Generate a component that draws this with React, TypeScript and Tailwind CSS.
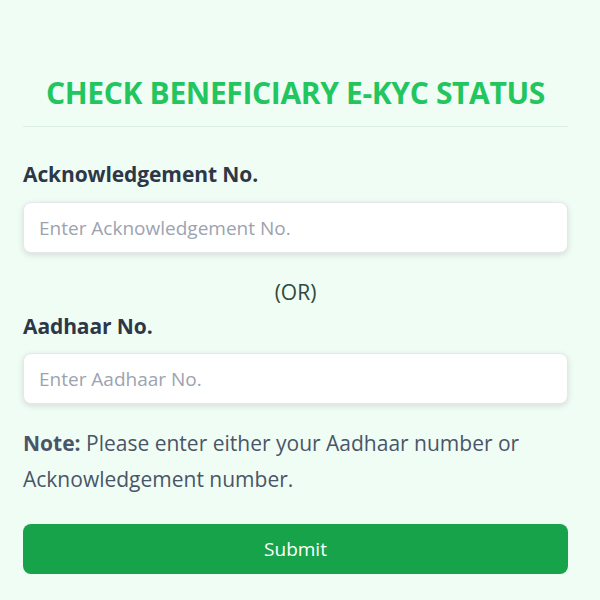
export default function App() {
  return (
    <div className="min-h-[600px] bg-[#f0fdf4] font-['Open_Sans',sans-serif]">
      <div className="pl-[23px] pr-[32px] pt-[71px]">
        <h1 className="text-center text-[30px] font-bold text-[#22c55e] leading-[44px] tracking-[-0.35px]">
          CHECK BENEFICIARY E-KYC STATUS
        </h1>
        <div className="mt-[11px] h-px bg-[#dcefe3]" />

        <div className="mt-[32px]">
          <label className="block text-[21px] font-bold text-[#2d3748] leading-[30px] tracking-[-0.1px]">
            Acknowledgement No.
          </label>
          <input
            type="text"
            placeholder="Enter Acknowledgement No."
            className="mt-[13px] block h-[51px] w-full rounded-lg bg-white px-[15px] text-[19px] text-gray-700 placeholder:text-[#9ca3af] shadow-[0_2px_6px_rgba(0,0,0,0.12)] border border-[#e5e7eb] outline-none"
          />
        </div>

        <p className="mt-[25px] text-center text-[21px] text-[#2f4a3a] leading-[28px]">(OR)</p>

        <div className="mt-[5px]">
          <label className="block text-[21px] font-bold text-[#2d3748] leading-[30px] tracking-[-0.1px]">
            Aadhaar No.
          </label>
          <input
            type="text"
            placeholder="Enter Aadhaar No."
            className="mt-[12px] block h-[51px] w-full rounded-lg bg-white px-[15px] text-[19px] text-gray-700 placeholder:text-[#9ca3af] shadow-[0_2px_6px_rgba(0,0,0,0.12)] border border-[#e5e7eb] outline-none"
          />
        </div>

        <div className="mt-[21px] text-[21px] text-[#4a5568] leading-[36px]">
          <strong className="font-bold">Note:</strong> Please enter either your Aadhaar number or Acknowledgement number.
        </div>

        <button className="mt-[27px] block h-[50px] w-full rounded-lg bg-[#16a34a] text-[19px] text-white">
          Submit
        </button>
      </div>
    </div>
  );
}
